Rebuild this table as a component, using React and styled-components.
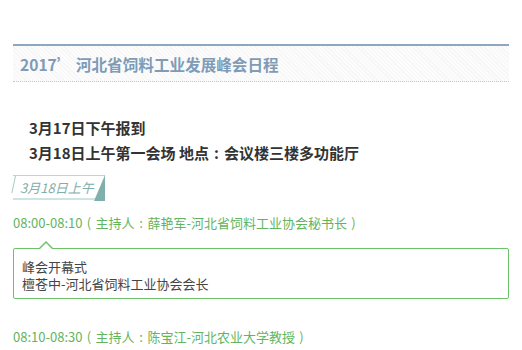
import React from "react";
import styled, { createGlobalStyle } from "styled-components";

const Global = createGlobalStyle`
  html, body { margin: 0; padding: 0; background: #fff; overflow: hidden; }
  body { font-family: "Noto Sans CJK SC", "Noto Sans", sans-serif; color: #333; }
`;

const Page = styled.div`
  padding: 44px 13px 0 13px;
`;

const Header = styled.div`
  border-top: 2px solid #8ea7bf;
  border-bottom: 1px dotted #c8c8c8;
  height: 35px;
  display: flex;
  align-items: center;
  padding-left: 7px;
  background: repeating-linear-gradient(
    45deg,
    #f6f6f6 0px,
    #f6f6f6 1px,
    #fcfcfc 1px,
    #fcfcfc 3px
  );
`;

const Title = styled.h1`
  margin: 0;
  font-size: 15.6px;
  font-weight: bold;
  color: #7f9bb6;
  line-height: 20px;
`;

const Intro = styled.div`
  margin-top: 33px;
  padding-left: 16px;
`;

const IntroLine = styled.div`
  font-size: 15px;
  font-weight: bold;
  line-height: 25px;
  color: #333;
`;

const P = styled.span`
  display: inline-block;
  width: 1em;
  text-align: center;
`;

const Tag = styled.div`
  position: relative;
  margin-top: 10px;
  width: 92px;
  height: 25px;
  box-sizing: border-box;
  border-top: 1px solid #b9d6d3;
  border-bottom: 2px solid #cfe3e1;
  display: flex;
  align-items: center;
  padding-left: 7px;
  font-size: 13px;
  font-style: italic;
  color: #80aeab;
  &::before {
    content: "";
    position: absolute;
    left: 2px;
    top: 0px;
    width: 1px;
    height: 17px;
    background: #a9c9c6;
    transform: skewX(-12deg);
    transform-origin: top left;
  }
  &::after {
    content: "";
    position: absolute;
    right: 0;
    top: -1px;
    width: 11px;
    height: 26px;
    background: #7fb0ab;
    clip-path: polygon(100% 0, 100% 100%, 0 100%);
  }
`;

const Time = styled.div`
  margin-top: ${(p) => p.$top}px;
  font-size: 13px;
  line-height: 20px;
  color: #62b55e;
`;

const Box = styled.div`
  position: relative;
  margin-top: 15px;
  border: 1px solid #6cc169;
  border-radius: 2px;
  padding: 9px 8px 6px 8px;
  font-size: 13px;
  line-height: 17px;
  color: #444;
  &::before {
    content: "";
    position: absolute;
    left: 24px;
    top: -8px;
    width: 0;
    height: 0;
    border-left: 8px solid transparent;
    border-right: 8px solid transparent;
    border-bottom: 8px solid #6cc169;
  }
  &::after {
    content: "";
    position: absolute;
    left: 25px;
    top: -6px;
    width: 0;
    height: 0;
    border-left: 7px solid transparent;
    border-right: 7px solid transparent;
    border-bottom: 7px solid #fff;
  }
`;

const BoxLine = styled.div``;

const sessions = [
  {
    time: "08:00-08:10",
    host: "薛艳军-河北省饲料工业协会秘书长",
    lines: ["峰会开幕式", "檀苍中-河北省饲料工业协会会长"],
    top: 13,
  },
  {
    time: "08:10-08:30",
    host: "陈宝江-河北农业大学教授",
    lines: ["主题报告", "陈宝江-河北农业大学教授"],
    top: 28,
  },
];

export default function App() {
  return (
    <Page>
      <Global />
      <Header>
        <Title>2017’ 河北省饲料工业发展峰会日程</Title>
      </Header>
      <Intro>
        <IntroLine>3月17日下午报到</IntroLine>
        <IntroLine>
          3月18日上午第一会场 地点<P>:</P>会议楼三楼多功能厅
        </IntroLine>
      </Intro>
      <Tag>3月18日上午</Tag>
      {sessions.map((s, i) => (
        <React.Fragment key={i}>
          <Time $top={s.top}>
            {s.time}
            <P>(</P>主持人<P>:</P>
            {s.host}
            <P>)</P>
          </Time>
          <Box>
            {s.lines.map((l, j) => (
              <BoxLine key={j}>{l}</BoxLine>
            ))}
          </Box>
        </React.Fragment>
      ))}
    </Page>
  );
}
